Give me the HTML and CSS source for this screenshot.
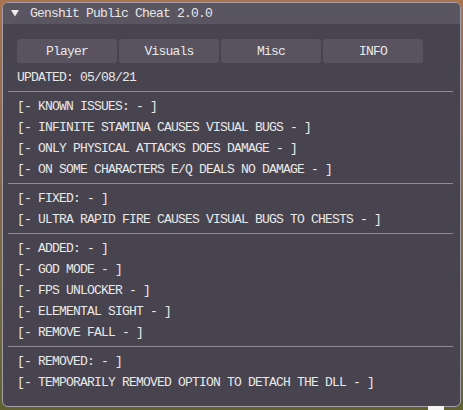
FILE: index.html
```html
<!DOCTYPE html>
<html>
<head>
<meta charset="utf-8">
<link rel="stylesheet" href="styles.css">
</head>
<body>
<div class="window">
  <div class="titlebar">
    <svg class="arrow" width="8" height="7" viewBox="0 0 8 7"><polygon points="0,0 8,0 4,6.5" fill="#ececec"/></svg>
    <span class="title">Genshit Public Cheat 2.0.0</span>
  </div>
  <div class="content">
    <div class="tabs">
      <div class="tab">Player</div>
      <div class="tab">Visuals</div>
      <div class="tab">Misc</div>
      <div class="tab">INFO</div>
    </div>
    <div class="line">UPDATED: 05/08/21</div>
    <div class="sep"></div>
    <div class="line">[- KNOWN ISSUES: - ]</div>
    <div class="line">[- INFINITE STAMINA CAUSES VISUAL BUGS - ]</div>
    <div class="line">[- ONLY PHYSICAL ATTACKS DOES DAMAGE - ]</div>
    <div class="line">[- ON SOME CHARACTERS E/Q DEALS NO DAMAGE - ]</div>
    <div class="sep"></div>
    <div class="line">[- FIXED: - ]</div>
    <div class="line">[- ULTRA RAPID FIRE CAUSES VISUAL BUGS TO CHESTS - ]</div>
    <div class="sep"></div>
    <div class="line">[- ADDED: - ]</div>
    <div class="line">[- GOD MODE - ]</div>
    <div class="line">[- FPS UNLOCKER - ]</div>
    <div class="line">[- ELEMENTAL SIGHT - ]</div>
    <div class="line">[- REMOVE FALL - ]</div>
    <div class="sep"></div>
    <div class="line">[- REMOVED: - ]</div>
    <div class="line">[- TEMPORARILY REMOVED OPTION TO DETACH THE DLL - ]</div>
  </div>
</div>
<div class="corner-badge"></div>
</body>
</html>
```
FILE: styles.css
```css
html, body {
  margin: 0;
  padding: 0;
}
body {
  width: 463px;
  height: 410px;
  overflow: hidden;
  position: relative;
  background: linear-gradient(180deg, #a8744e 0%, #8a6a4a 40%, #6f6a3c 80%, #5f6230 100%);
  font-family: "Liberation Mono", "DejaVu Sans Mono", monospace;
  font-size: 13px;
  letter-spacing: -0.8px;
  color: #e8e8e8;
}
.window {
  margin: 2px 0 0 2px;
  width: 457px;
  height: 403px;
  border: 1px solid #a29da8;
  border-radius: 6px;
  background: #48444f;
  overflow: hidden;
  display: flex;
  flex-direction: column;
}
.titlebar {
  height: 21px;
  background: #5a5661;
  display: flex;
  align-items: center;
  flex-shrink: 0;
}
.arrow {
  margin-left: 8px;
  margin-top: -1px;
}
.title {
  margin-left: 11px;
  color: #e6e6e8;
}
.content {
  padding: 15px 7px 0 14px;
  display: flex;
  flex-direction: column;
  gap: 7px;
}
.tabs {
  display: flex;
  gap: 2px;
}
.tab {
  width: 100px;
  height: 24px;
  border-radius: 3px;
  background: #58535f;
  display: flex;
  align-items: center;
  justify-content: center;
  color: #e8e8e8;
}
.line {
  height: 13px;
  padding-top: 1px;
  line-height: 14px;
  white-space: nowrap;
}
.sep {
  height: 1px;
  background: #8f8a97;
  margin-left: -9px;
}
.corner-badge {
  position: absolute;
  left: 428px;
  top: 406px;
  width: 16px;
  height: 4px;
  background: #f4f4f4;
}
```
